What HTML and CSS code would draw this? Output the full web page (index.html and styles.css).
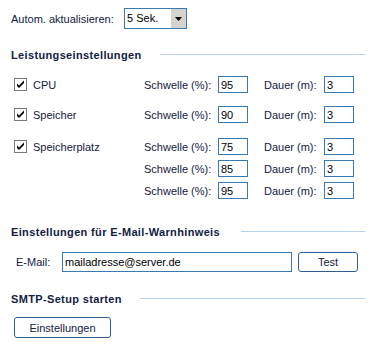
FILE: index.html
```html
<!DOCTYPE html>
<html>
  <head>
    <meta charset="UTF-8" />
    <title>Leistung</title>
    <link rel="stylesheet" href="styles.css">
  </head>
  <body>
    <div class="top_row">
      <span class="top_label">Autom. aktualisieren:</span>
      <div class="combo">
        <span class="combo_value">5 Sek.</span>
        <span class="combo_button">
          <svg width="7" height="4" viewBox="0 0 7 4"><path d="M0 0h7L3.5 4z" fill="#000"/></svg>
        </span>
      </div>
    </div>

    <div class="section_head head_perf">
      <span class="section_title">Leistungseinstellungen</span>
      <span class="section_line"></span>
    </div>

    <div class="perf_group group_cpu">
      <div class="perf_row">
        <label class="check_label"><span class="check_box"><svg width="9" height="9" viewBox="0 0 9 9"><path d="M1 3.5l2 2 5-5v2.5L3 8 1 6z" fill="#000"/></svg></span>CPU</label>
        <span class="field_label">Schwelle (%):</span>
        <input class="small_input" type="text" value="95">
        <span class="field_label dauer">Dauer (m):</span>
        <input class="small_input" type="text" value="3">
      </div>
    </div>

    <div class="perf_group group_mem">
      <div class="perf_row">
        <label class="check_label"><span class="check_box"><svg width="9" height="9" viewBox="0 0 9 9"><path d="M1 3.5l2 2 5-5v2.5L3 8 1 6z" fill="#000"/></svg></span>Speicher</label>
        <span class="field_label">Schwelle (%):</span>
        <input class="small_input" type="text" value="90">
        <span class="field_label dauer">Dauer (m):</span>
        <input class="small_input" type="text" value="3">
      </div>
    </div>

    <div class="perf_group group_disk">
      <div class="perf_row">
        <label class="check_label"><span class="check_box"><svg width="9" height="9" viewBox="0 0 9 9"><path d="M1 3.5l2 2 5-5v2.5L3 8 1 6z" fill="#000"/></svg></span>Speicherplatz</label>
        <span class="field_label">Schwelle (%):</span>
        <input class="small_input" type="text" value="75">
        <span class="field_label dauer">Dauer (m):</span>
        <input class="small_input" type="text" value="3">
      </div>
      <div class="perf_row">
        <span class="check_label"></span>
        <span class="field_label">Schwelle (%):</span>
        <input class="small_input" type="text" value="85">
        <span class="field_label dauer">Dauer (m):</span>
        <input class="small_input" type="text" value="3">
      </div>
      <div class="perf_row">
        <span class="check_label"></span>
        <span class="field_label">Schwelle (%):</span>
        <input class="small_input" type="text" value="95">
        <span class="field_label dauer">Dauer (m):</span>
        <input class="small_input" type="text" value="3">
      </div>
    </div>

    <div class="section_head head_mail">
      <span class="section_title">Einstellungen für E-Mail-Warnhinweis</span>
      <span class="section_line"></span>
    </div>

    <div class="mail_row">
      <span class="mail_label">E-Mail:</span>
      <input class="mail_input" type="text" value="mailadresse@server.de">
      <button class="win_button test_button">Test</button>
    </div>

    <div class="section_head head_smtp">
      <span class="section_title">SMTP-Setup starten</span>
      <span class="section_line"></span>
    </div>

    <div class="smtp_row">
      <button class="win_button setup_button">Einstellungen</button>
    </div>
  </body>
</html>
```

FILE: styles.css
```css
body {
  margin: 0;
  width: 377px;
  height: 355px;
  background-color: #ffffff;
  font-family: "Liberation Sans", Arial, sans-serif;
  font-size: 11px;
  color: #12213f;
  overflow: hidden;
}

/* Refresh combo */
.top_row {
  display: flex;
  align-items: center;
  padding: 8px 0 0 11px;
  height: 21px;
}
.top_label {
  width: 113px;
}
.combo {
  display: flex;
  width: 61px;
  height: 19px;
  border: 1px solid #3a7ab3;
  background-color: #fff;
}
.combo_value {
  flex: 1;
  padding-left: 2px;
  line-height: 19px;
  color: #000;
}
.combo_button {
  width: 15px;
  background-color: #d6d3ce;
  display: flex;
  align-items: center;
  justify-content: center;
}

/* Section headers */
.section_head {
  display: flex;
  align-items: center;
  padding: 0 12px 0 11px;
  height: 14px;
}
.section_title {
  font-weight: bold;
  font-size: 11px;
  letter-spacing: 0.35px;
  margin-right: 18px;
}
.section_line {
  flex: 1;
  border-top: 1px solid #b9d2ec;
  margin-top: -2px;
}
.head_perf {
  margin-top: 19px;
}
.head_mail {
  margin-top: 26px;
}
.head_mail .section_title {
  margin-right: 21px;
}
.head_smtp {
  margin-top: 20px;
}

/* Performance rows */
.perf_group {
  display: flex;
  flex-direction: column;
  gap: 5px;
  padding-left: 14px;
}
.group_cpu {
  margin-top: 14px;
}
.group_mem {
  margin-top: 13px;
}
.group_disk {
  margin-top: 15px;
}
.perf_row {
  display: flex;
  align-items: center;
  height: 17px;
}
.check_label {
  display: flex;
  align-items: center;
  width: 130px;
}
.check_box {
  width: 11px;
  height: 11px;
  border: 1px solid #7a7a7a;
  background-color: #fff;
  margin-right: 6px;
  display: flex;
  align-items: center;
  justify-content: center;
}
.field_label {
  width: 74px;
}
.field_label.dauer {
  width: 60px;
  margin-left: 16px;
}
.small_input {
  box-sizing: border-box;
  width: 30px;
  height: 17px;
  border: 1px solid #3a7ab3;
  padding: 0 2px;
  font-family: "Liberation Sans", Arial, sans-serif;
  font-size: 11px;
  color: #000;
  outline: none;
}

/* Mail */
.mail_row {
  display: flex;
  align-items: center;
  padding-left: 16px;
  margin-top: 13px;
  height: 20px;
}
.mail_label {
  width: 46px;
}
.mail_input {
  box-sizing: border-box;
  width: 230px;
  height: 20px;
  border: 1px solid #3a7ab3;
  padding: 0 2px;
  font-family: "Liberation Sans", Arial, sans-serif;
  font-size: 11px;
  color: #000;
  outline: none;
}
.win_button {
  box-sizing: border-box;
  height: 20px;
  border: 1px solid #2f5f91;
  border-radius: 3px;
  background-color: #fff;
  font-family: "Liberation Sans", Arial, sans-serif;
  font-size: 11px;
  color: #12213f;
  padding: 0;
}
.test_button {
  width: 60px;
  margin-left: 6px;
}

/* SMTP */
.smtp_row {
  padding-left: 14px;
  margin-top: 11px;
}
.setup_button {
  width: 97px;
  height: 21px;
}
```
